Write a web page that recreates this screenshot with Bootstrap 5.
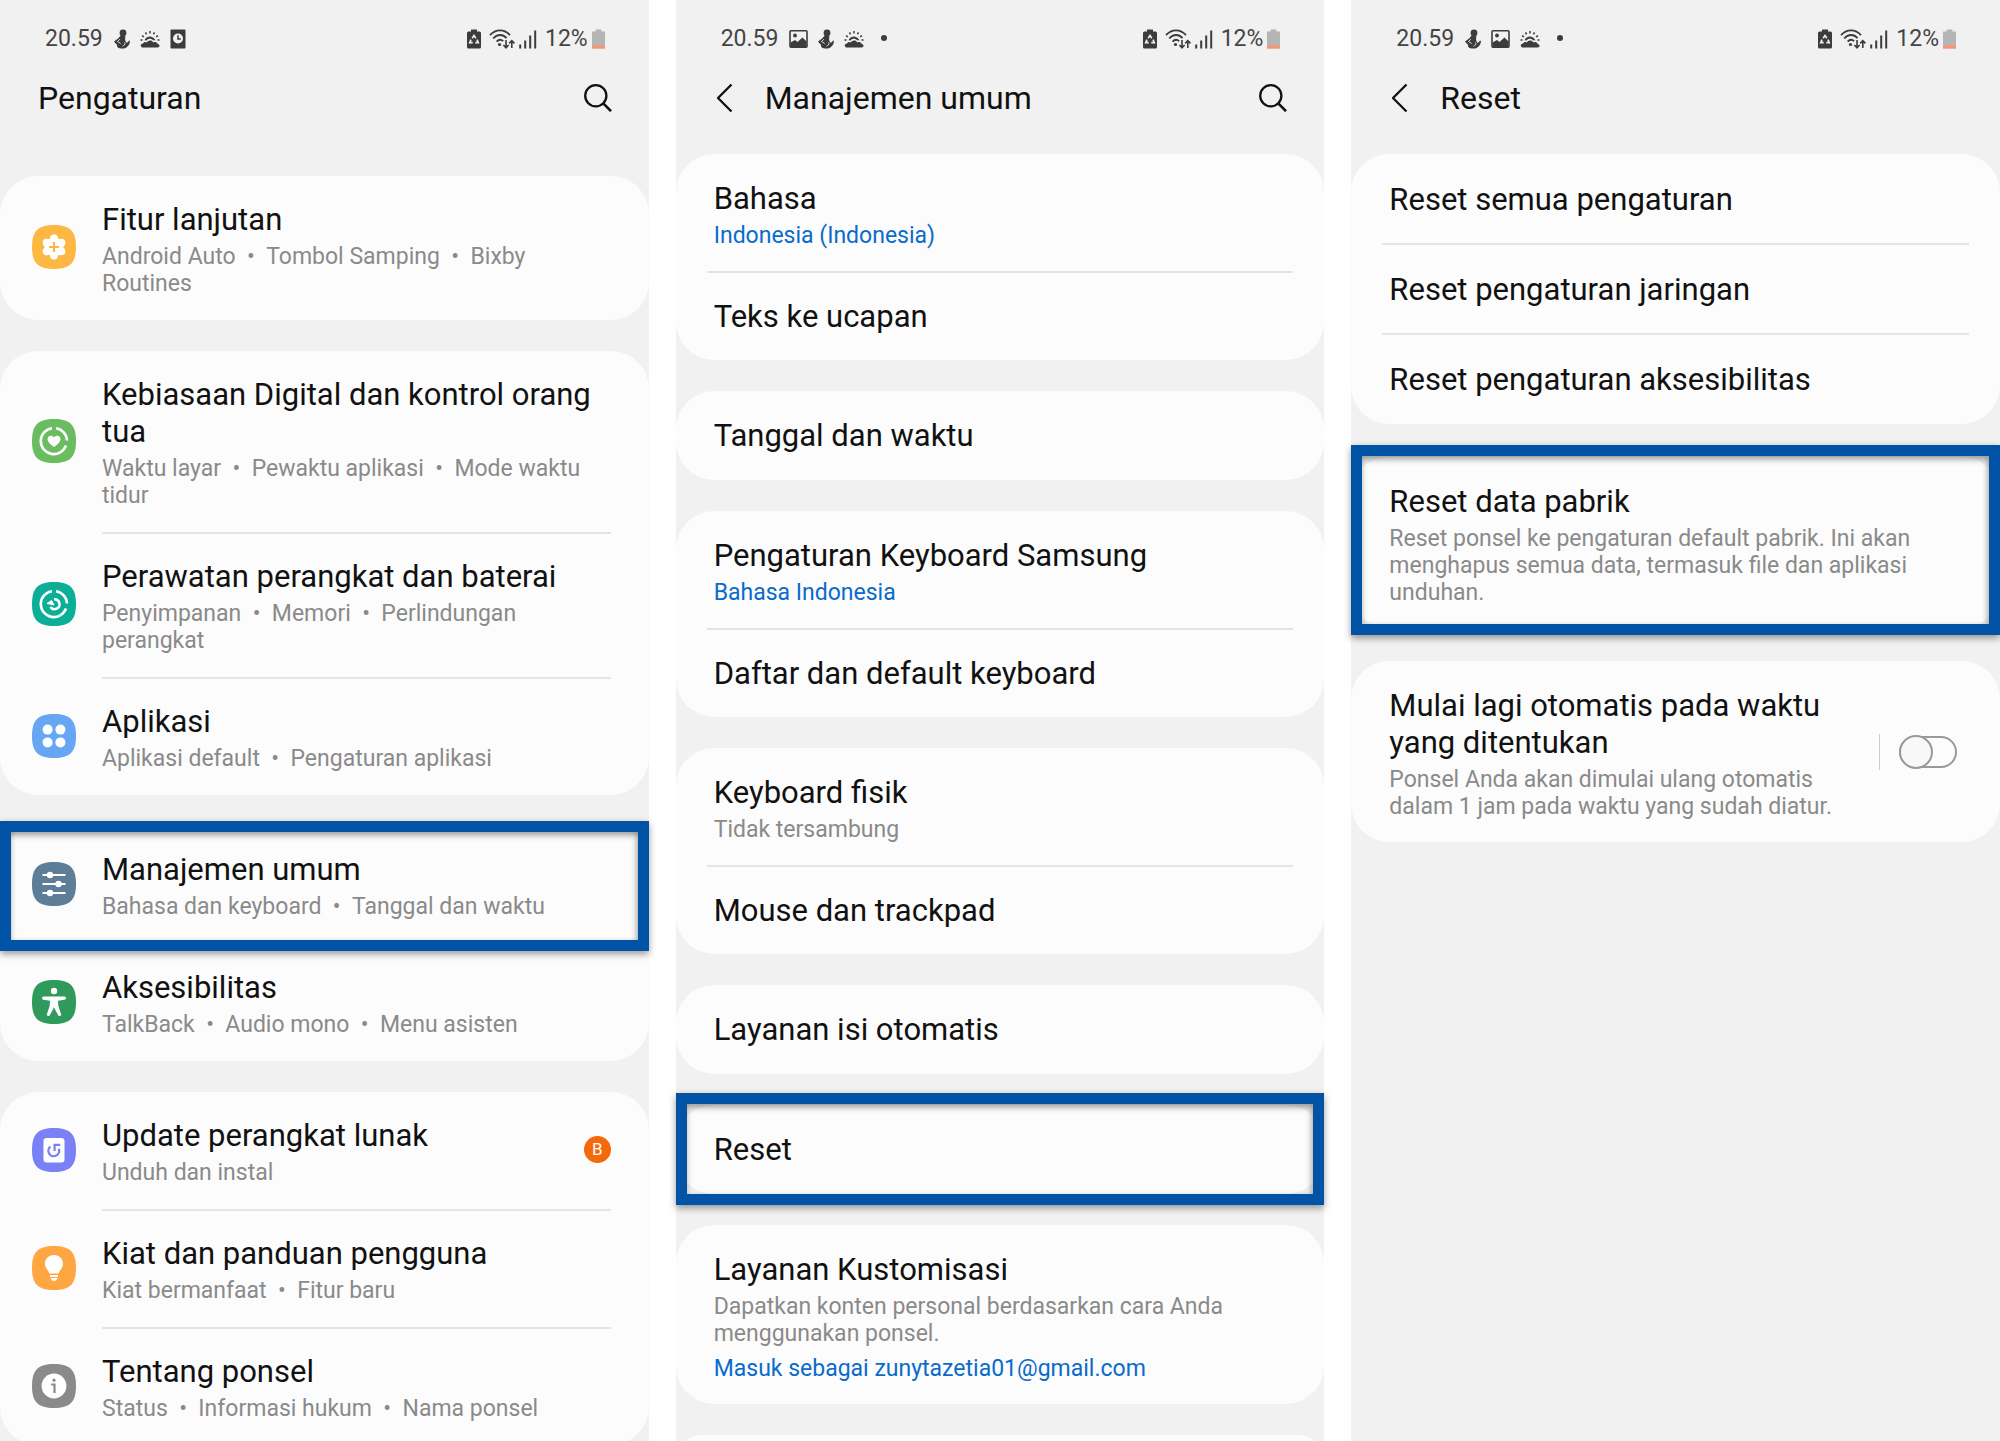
<!DOCTYPE html>
<html lang="id">
<head>
<meta charset="utf-8">
<meta name="viewport" content="width=device-width, initial-scale=1">
<title>Pengaturan – Reset data pabrik</title>
<link href="https://cdn.jsdelivr.net/npm/bootstrap@5.3.0/dist/css/bootstrap.min.css" rel="stylesheet">
<style>
  body { font-family: Roboto, "Liberation Sans", sans-serif; background: #fff; color: #111; }
  .stage { gap: 27px; }
  .phone { flex: 1 1 0; min-width: 0; background: #f1f1f1; }
  .status { padding: 26px 44px 0 45px; height: 51px; font-size: 23px; line-height: 27px; color: #444; }
  .status svg { display: block; flex: none; }
  .status-icons { gap: 10px; margin-left: 11px; }
  .titlebar { padding: 27px 37px 36px 38px; }
  .titlebar.tall { padding-bottom: 58px; }
  .titlebar h1 { font-size: 32px; line-height: 40px; font-weight: 400; margin: 0; }
  .titlebar.nav-back { padding-left: 40px; }
  .titlebar.nav-back h1 { margin-left: 32px; }
  .titlebar button, .titlebar .back { border: 0; background: none; padding: 0; color: #111; line-height: 0; }
  .groups { gap: 31px; }
  .panel { border: 0; border-radius: 38px; background: #fcfcfc; }
  .panel.framed { margin: 2px 0; }
  .entry { position: relative; color: #111; text-decoration: none; padding: 26px 38px 22px; }
  .entry.solo { padding-bottom: 25px; }
  .entry.solo:only-child { padding-bottom: 26px; }
  .entry.roomy { padding: 27px 38px 26px; }
  .entry.with-icon { padding: 25px 38px 23px 32px; gap: 26px; }
  .entry + .entry::before { content: ""; position: absolute; top: -1px; left: 31px; right: 31px; height: 2px; background: #e4e4e4; }
  .entry.with-icon + .entry.with-icon::before { left: 102px; right: 38px; }
  .entry:not(:last-child) { margin-bottom: 1px; }
  .entry.roomy:not(:last-child) { margin-bottom: 0; }
  .entry-title { display: block; font-size: 31px; line-height: 37px; }
  .entry-sub { display: block; font-size: 23px; line-height: 27px; margin-top: 5px; color: #8a8a8a; }
  .with-icon .entry-sub { padding-right: 8px; }
  .accent { color: #0a6bcb; }
  .accent.after { margin-top: 8px; }
  .tile { flex: none; width: 44px; height: 44px; margin-bottom: 4px; }
  .notice { width: 27px; height: 27px; margin-bottom: 4px; border-radius: 50%; background: #f4690c; color: #fff; font-size: 17px; line-height: 27px; text-align: center; flex: none; }
  .marker { position: absolute; z-index: 2; left: 0; right: 0; top: -5px; bottom: -8px; border: 11px solid #0053a5; pointer-events: none;
    box-shadow: 0 3px 7px rgba(0,0,0,.4), inset -1px 3px 6px rgba(0,0,0,.4); }
  .marker.wide { top: -12px; bottom: -11px; }
  .marker.high { top: -12px; bottom: -7px; }
  .switch-cell { border-left: 1px solid #ccc; height: 36px; padding-left: 19px; margin-right: 5px; }
  .toggle { appearance: none; position: relative; display: block; width: 58px; height: 32px; margin: 2px 0; border: 2px solid #999; border-radius: 16px; background: #fcfcfc; cursor: pointer; }
  .toggle::before { content: ""; position: absolute; left: -2px; top: -3px; width: 34px; height: 34px; border: 2px solid #999; border-radius: 50%; background: #f8f8f8; }
  .toggle:checked::before { left: 22px; }
</style>
<script src="https://cdn.jsdelivr.net/npm/bootstrap@5.3.0/dist/js/bootstrap.bundle.min.js"></script>
</head>
<body>
<svg width="0" height="0" class="position-absolute" aria-hidden="true">
  <symbol id="i-figure" viewBox="0 0 16 20">
    <circle cx="9" cy="4" r="3.400" fill="#3c3c3c"/>
    <path d="M6.500 6.500h4.500c1 1.600-.4 3 .2 4.500l.8 2.600c1.300.2 2.400-.6 2.800-2.100l1.200.4c-.4 4.700-3.500 7.700-8 7.700-3.600 0-5.500-1.600-5-3.800L0 12.800C1.500 11 4.500 10 6.500 6.500z" fill="#3c3c3c"/>
    <path d="M5.800 10.200l-2.300 2.300 3.100 2M10.800 13.500c.4 1.900-.6 3.300-2.200 3.500" stroke="#f1f1f1" stroke-width="0.900" fill="none"/>
  </symbol>
  <symbol id="i-sun" viewBox="0 0 20 20">
    <path d="M2 18.500c-2-1-1.500-4 1-4 .6-1.600 2.600-2 3.800-1 1.300-2.600 5.300-2.800 6.600 0 2-1 3.800 0 4.200 1.400 2.600.2 2.600 3.600 0 3.600z" fill="#3c3c3c"/>
    <path d="M4.600 11.200C6.500 6.200 13 6.200 15.600 11.500c-1.500-.3-2.200 0-2.200 0C11.500 9 8 9 6.500 11.600z" fill="#3c3c3c"/>
    <path d="M10 2v2.400M5.500 3.400l1 2M14.500 3.400l-1 2M2 6.600l2 1.300M18 6.600l-2 1.300M.5 11h2M17.500 11h2" stroke="#3c3c3c" stroke-width="1.500"/>
  </symbol>
  <symbol id="i-clock" viewBox="0 0 16 20">
    <rect x="0.500" y="0.500" width="15" height="19" rx="1" fill="#3c3c3c"/>
    <circle cx="8" cy="9.500" r="5" fill="#f1f1f1"/>
    <path d="M8 6.300v3.600h2.800" stroke="#3c3c3c" stroke-width="1.500" fill="none"/>
  </symbol>
  <symbol id="i-image" viewBox="0 0 19 20">
    <rect x="1" y="1.800" width="17" height="16.400" rx="1" fill="none" stroke="#3c3c3c" stroke-width="1.600"/>
    <circle cx="6" cy="6.500" r="1.900" fill="#3c3c3c"/>
    <path d="M1.500 13.500l4.500-2.500 2.500 2 5-4.500 4 4V18h-16z" fill="#3c3c3c"/>
  </symbol>
  <symbol id="i-recycle" viewBox="0 0 14 20">
    <path d="M4 .5h6v2h2.500q1.500 0 1.500 1.500v14q0 1.500-1.500 1.500h-11Q0 19.500 0 18V4q0-1.500 1.500-1.500H4z" fill="#3c3c3c"/>
    <path d="M5.200 9.200L7 6.400l1.800 2.800M10 10.600l1.300 3H8.300M5.700 13.600h-3L4 10.600" fill="none" stroke="#f1f1f1" stroke-width="1.600"/>
  </symbol>
  <symbol id="i-wifi" viewBox="0 0 26 20">
    <path d="M1 6.200C6.500-.3 15.500-.3 21 6.200M4.200 9.500c4-4.600 9.600-4.600 13.400-.4M7.600 12.600c2-2.200 4.600-2.300 6.600-.5" fill="none" stroke="#3c3c3c" stroke-width="1.800"/>
    <circle cx="10.500" cy="15.500" r="1.600" fill="#3c3c3c"/>
    <path d="M17 11v7.500M14.400 16l2.600 2.800 2.600-2.800M22.800 19v-7M20.200 14.400l2.600-2.800 2.600 2.800" fill="none" stroke="#3c3c3c" stroke-width="1.600"/>
  </symbol>
  <symbol id="i-signal" viewBox="0 0 18 20">
    <path d="M1.200 19.500v-4M6.200 19.500v-8M11.200 19.500V6.500M16.200 19.500V1.500" stroke="#3c3c3c" stroke-width="2"/>
  </symbol>
  <symbol id="i-battery" viewBox="0 0 13 20">
    <path d="M3.500.5h6v2H13v17H0v-17h3.500z" fill="#b5b5b5"/><path d="M0 16.500h13v3H0z" fill="#fb9273"/>
  </symbol>
  <symbol id="i-search" viewBox="0 0 28 28">
    <circle cx="11.800" cy="11.800" r="10.600" fill="none" stroke="#111" stroke-width="2.300"/>
    <path d="M19.300 19.300L27 27.200" stroke="#111" stroke-width="2.600"/>
  </symbol>
  <symbol id="i-back" viewBox="0 0 17 30">
    <path d="M15.500 1.500L2 15l13.500 13.500" fill="none" stroke="#111" stroke-width="2.300" stroke-linejoin="round"/>
  </symbol>
  <symbol id="i-squircle" viewBox="0 0 44 44">
    <path d="M22 0C38 0 44 6 44 22S38 44 22 44 0 38 0 22 6 0 22 0z"/>
  </symbol>
</svg>

<div class="stage d-flex vh-100 overflow-hidden">

  <section class="phone" aria-label="Pengaturan">
    <div class="status d-flex align-items-center">
      <span>20.59</span>
      <div class="status-icons d-flex">
        <svg width="16" height="20"><use href="#i-figure"/></svg>
        <svg width="20" height="20"><use href="#i-sun"/></svg>
        <svg width="16" height="20"><use href="#i-clock"/></svg>
      </div>
      <div class="d-flex align-items-center ms-auto">
        <svg class="me-2" width="14" height="20"><use href="#i-recycle"/></svg>
        <svg class="me-1" width="26" height="20"><use href="#i-wifi"/></svg>
        <svg class="me-2" width="18" height="20"><use href="#i-signal"/></svg>
        <span class="me-1">12%</span>
        <svg width="13" height="20"><use href="#i-battery"/></svg>
      </div>
    </div>
    <header class="titlebar tall d-flex align-items-center">
      <h1>Pengaturan</h1>
      <button type="button" class="ms-auto" aria-label="Cari"><svg width="28" height="28"><use href="#i-search"/></svg></button>
    </header>
    <div class="groups d-flex flex-column">
      <nav class="panel card">
        <a href="#" class="entry with-icon d-flex align-items-center">
          <svg class="tile" viewBox="0 0 44 44"><use href="#i-squircle" fill="#fdb844"/>
            <g fill="#fff"><circle cx="22" cy="22" r="9.500"/><circle cx="22" cy="13.500" r="3.900"/><circle cx="22" cy="30.500" r="3.900"/><circle cx="14.600" cy="17.700" r="3.900"/><circle cx="29.400" cy="17.700" r="3.900"/><circle cx="14.600" cy="26.300" r="3.900"/><circle cx="29.400" cy="26.300" r="3.900"/></g>
            <path d="M22 17v10M17 22h10" stroke="#fdb844" stroke-width="2.200"/></svg>
          <span class="flex-grow-1"><span class="entry-title">Fitur lanjutan</span><span class="entry-sub">Android Auto &nbsp;• &nbsp;Tombol Samping &nbsp;• &nbsp;Bixby Routines</span></span>
        </a>
      </nav>
      <nav class="panel card">
        <a href="#" class="entry with-icon d-flex align-items-center">
          <svg class="tile" viewBox="0 0 44 44"><use href="#i-squircle" fill="#6abc60"/>
            <path d="M20 9.200A13 13 0 1 0 34 26.500M24 9.200a13 13 0 0 1 11 12.300" fill="none" stroke="#fff" stroke-width="2.600"/>
            <path d="M22 28c-4-3-6.500-5.200-6.500-8 0-3.500 4.600-4.500 6.500-1.500 1.900-3 6.500-2 6.500 1.500 0 2.800-2.500 5-6.500 8z" fill="#fff"/></svg>
          <span class="flex-grow-1"><span class="entry-title">Kebiasaan Digital dan kontrol orang tua</span><span class="entry-sub">Waktu layar &nbsp;• &nbsp;Pewaktu aplikasi &nbsp;• &nbsp;Mode waktu tidur</span></span>
        </a>
        <a href="#" class="entry with-icon d-flex align-items-center">
          <svg class="tile" viewBox="0 0 44 44"><use href="#i-squircle" fill="#0bae97"/>
            <path d="M20 9.200A13 13 0 1 0 34 26.500M24 9.200a13 13 0 0 1 11 12.300" fill="none" stroke="#fff" stroke-width="2.600"/>
            <path d="M22 17.200a5 5 0 1 1-3.600 7.800" fill="none" stroke="#fff" stroke-width="2.500"/><path d="M15 21.500l4.500-3 2.500 4.300z" fill="#fff" stroke="#fff"/></svg>
          <span class="flex-grow-1"><span class="entry-title">Perawatan perangkat dan baterai</span><span class="entry-sub">Penyimpanan &nbsp;• &nbsp;Memori &nbsp;• &nbsp;Perlindungan perangkat</span></span>
        </a>
        <a href="#" class="entry with-icon d-flex align-items-center">
          <svg class="tile" viewBox="0 0 44 44"><use href="#i-squircle" fill="#67a6f2"/>
            <g fill="#fff"><circle cx="15.600" cy="15.600" r="5"/><circle cx="28.400" cy="15.600" r="5"/><circle cx="15.600" cy="28.400" r="5"/><circle cx="28.400" cy="28.400" r="5"/></g></svg>
          <span class="flex-grow-1"><span class="entry-title">Aplikasi</span><span class="entry-sub">Aplikasi default &nbsp;• &nbsp;Pengaturan aplikasi</span></span>
        </a>
      </nav>
      <nav class="panel card">
        <a href="#" class="entry with-icon d-flex align-items-center">
          <svg class="tile" viewBox="0 0 44 44"><use href="#i-squircle" fill="#5e7d96"/>
            <path d="M10.500 13h23M10.500 22h23M10.500 31h23" stroke="#fff" stroke-width="2.200"/>
            <g fill="#fff"><circle cx="18" cy="13" r="3.200"/><circle cx="26.500" cy="22" r="3.200"/><circle cx="18" cy="31" r="3.200"/></g></svg>
          <span class="flex-grow-1"><span class="entry-title">Manajemen umum</span><span class="entry-sub">Bahasa dan keyboard &nbsp;• &nbsp;Tanggal dan waktu</span></span>
          <span class="marker"></span>
        </a>
        <a href="#" class="entry with-icon d-flex align-items-center">
          <svg class="tile" viewBox="0 0 44 44"><use href="#i-squircle" fill="#2f9a5c"/>
            <circle cx="22" cy="11" r="3.200" fill="#fff"/>
            <path d="M11.500 16.500h21q1.500 0 1.500 1.600t-1.500 1.600L26 20.700l.3 5 3 9.300q-1.500 1.800-3 .5L22 27.500l-4.300 8q-1.500 1.300-3-.5l3-9.300.3-5-6.500-1Q10 19.700 10 18.100t1.500-1.600z" fill="#fff"/></svg>
          <span class="flex-grow-1"><span class="entry-title">Aksesibilitas</span><span class="entry-sub">TalkBack &nbsp;• &nbsp;Audio mono &nbsp;• &nbsp;Menu asisten</span></span>
        </a>
      </nav>
      <nav class="panel card">
        <a href="#" class="entry with-icon d-flex align-items-center">
          <svg class="tile" viewBox="0 0 44 44"><use href="#i-squircle" fill="#7a80f5"/>
            <rect x="11.500" y="10" width="21" height="24.500" rx="3" fill="#fff"/>
            <path d="M18.400 18.600a5.400 5.400 0 1 0 8.400 2.200" fill="none" stroke="#7a80f5" stroke-width="2.300"/><path d="M22.600 23v-6.200h5.600" fill="none" stroke="#7a80f5" stroke-width="2.200"/></svg>
          <span class="flex-grow-1"><span class="entry-title">Update perangkat lunak</span><span class="entry-sub">Unduh dan instal</span></span>
          <span class="notice">B</span>
        </a>
        <a href="#" class="entry with-icon d-flex align-items-center">
          <svg class="tile" viewBox="0 0 44 44"><use href="#i-squircle" fill="#fea742"/>
            <path d="M22 9c5.200 0 9 3.800 9 8.800 0 4.200-3.200 6-4.500 9.700h-9C16.200 23.800 13 22 13 17.800 13 12.800 16.800 9 22 9zM18 29h8v2h-8zM18.500 32h7L24 34.800h-4z" fill="#fff"/></svg>
          <span class="flex-grow-1"><span class="entry-title">Kiat dan panduan pengguna</span><span class="entry-sub">Kiat bermanfaat &nbsp;• &nbsp;Fitur baru</span></span>
        </a>
        <a href="#" class="entry with-icon d-flex align-items-center">
          <svg class="tile" viewBox="0 0 44 44"><use href="#i-squircle" fill="#8a8a8a"/>
            <circle cx="22" cy="22" r="12.400" fill="#fff"/><circle cx="22" cy="16.200" r="1.600" fill="#8a8a8a"/>
            <path d="M19.200 20.500h3.300V29" fill="none" stroke="#8a8a8a" stroke-width="2.200"/></svg>
          <span class="flex-grow-1"><span class="entry-title">Tentang ponsel</span><span class="entry-sub">Status &nbsp;• &nbsp;Informasi hukum &nbsp;• &nbsp;Nama ponsel</span></span>
        </a>
      </nav>
    </div>
  </section>

  <section class="phone" aria-label="Manajemen umum">
    <div class="status d-flex align-items-center">
      <span>20.59</span>
      <div class="status-icons d-flex">
        <svg width="19" height="20"><use href="#i-image"/></svg>
        <svg width="16" height="20"><use href="#i-figure"/></svg>
        <svg width="20" height="20"><use href="#i-sun"/></svg>
        <svg width="20" height="20"><circle cx="10" cy="9" r="3" fill="#3c3c3c"/></svg>
      </div>
      <div class="d-flex align-items-center ms-auto">
        <svg class="me-2" width="14" height="20"><use href="#i-recycle"/></svg>
        <svg class="me-1" width="26" height="20"><use href="#i-wifi"/></svg>
        <svg class="me-2" width="18" height="20"><use href="#i-signal"/></svg>
        <span class="me-1">12%</span>
        <svg width="13" height="20"><use href="#i-battery"/></svg>
      </div>
    </div>
    <header class="titlebar nav-back d-flex align-items-center">
      <a href="#" class="back" aria-label="Kembali"><svg width="17" height="30"><use href="#i-back"/></svg></a>
      <h1>Manajemen umum</h1>
      <button type="button" class="ms-auto" aria-label="Cari"><svg width="28" height="28"><use href="#i-search"/></svg></button>
    </header>
    <div class="groups d-flex flex-column">
      <nav class="panel card">
        <a href="#" class="entry"><span class="entry-title">Bahasa</span><span class="entry-sub accent">Indonesia (Indonesia)</span></a>
        <a href="#" class="entry solo"><span class="entry-title">Teks ke ucapan</span></a>
      </nav>
      <nav class="panel card">
        <a href="#" class="entry solo"><span class="entry-title">Tanggal dan waktu</span></a>
      </nav>
      <nav class="panel card">
        <a href="#" class="entry"><span class="entry-title">Pengaturan Keyboard Samsung</span><span class="entry-sub accent">Bahasa Indonesia</span></a>
        <a href="#" class="entry solo"><span class="entry-title">Daftar dan default keyboard</span></a>
      </nav>
      <nav class="panel card">
        <a href="#" class="entry"><span class="entry-title">Keyboard fisik</span><span class="entry-sub">Tidak tersambung</span></a>
        <a href="#" class="entry solo"><span class="entry-title">Mouse dan trackpad</span></a>
      </nav>
      <nav class="panel card">
        <a href="#" class="entry solo"><span class="entry-title">Layanan isi otomatis</span></a>
      </nav>
      <nav class="panel card">
        <a href="#" class="entry solo"><span class="entry-title">Reset</span><span class="marker wide"></span></a>
      </nav>
      <nav class="panel card">
        <a href="#" class="entry"><span class="entry-title">Layanan Kustomisasi</span><span class="entry-sub">Dapatkan konten personal berdasarkan cara Anda menggunakan ponsel.</span><span class="entry-sub accent after">Masuk sebagai zunytazetia01@gmail.com</span></a>
      </nav>
      <div class="panel card"><div class="entry solo"></div></div>
    </div>
  </section>

  <section class="phone" aria-label="Reset">
    <div class="status d-flex align-items-center">
      <span>20.59</span>
      <div class="status-icons d-flex">
        <svg width="16" height="20"><use href="#i-figure"/></svg>
        <svg width="19" height="20"><use href="#i-image"/></svg>
        <svg width="20" height="20"><use href="#i-sun"/></svg>
        <svg width="20" height="20"><circle cx="10" cy="9" r="3" fill="#3c3c3c"/></svg>
      </div>
      <div class="d-flex align-items-center ms-auto">
        <svg class="me-2" width="14" height="20"><use href="#i-recycle"/></svg>
        <svg class="me-1" width="26" height="20"><use href="#i-wifi"/></svg>
        <svg class="me-2" width="18" height="20"><use href="#i-signal"/></svg>
        <span class="me-1">12%</span>
        <svg width="13" height="20"><use href="#i-battery"/></svg>
      </div>
    </div>
    <header class="titlebar nav-back d-flex align-items-center">
      <a href="#" class="back" aria-label="Kembali"><svg width="17" height="30"><use href="#i-back"/></svg></a>
      <h1>Reset</h1>
    </header>
    <div class="groups d-flex flex-column">
      <nav class="panel card">
        <a href="#" class="entry roomy"><span class="entry-title">Reset semua pengaturan</span></a>
        <a href="#" class="entry roomy"><span class="entry-title">Reset pengaturan jaringan</span></a>
        <a href="#" class="entry roomy"><span class="entry-title">Reset pengaturan aksesibilitas</span></a>
      </nav>
      <nav class="panel card framed">
        <a href="#" class="entry"><span class="entry-title">Reset data pabrik</span><span class="entry-sub">Reset ponsel ke pengaturan default pabrik. Ini akan menghapus semua data, termasuk file dan aplikasi unduhan.</span><span class="marker high"></span></a>
      </nav>
      <div class="panel card">
        <div class="entry d-flex align-items-center">
          <label for="autoRestart" class="flex-grow-1 pe-4"><span class="entry-title">Mulai lagi otomatis pada waktu yang ditentukan</span><span class="entry-sub">Ponsel Anda akan dimulai ulang otomatis dalam 1 jam pada waktu yang sudah diatur.</span></label>
          <div class="switch-cell mb-1"><input class="toggle" type="checkbox" role="switch" id="autoRestart"></div>
        </div>
      </div>
    </div>
  </section>
</div>
</body>
</html>
